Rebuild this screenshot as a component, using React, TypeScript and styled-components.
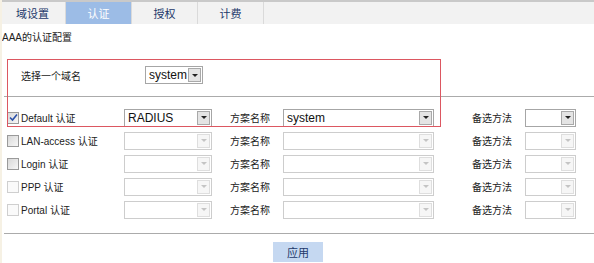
import React from 'react';
import { createGlobalStyle, styled } from 'styled-components';

const GlobalStyle = createGlobalStyle`
  body {
    margin: 0;
    background: #ffffff;
    font-family: "Liberation Sans", "Noto Sans CJK SC", sans-serif;
    font-size: 10px;
    color: #222222;
  }
`;

const StyledPage = styled.div`
  position: relative;
  width: 594px;
  height: 263px;
  overflow: hidden;
  border-left: 2px solid #f6f1e4;
  box-sizing: border-box;
`;

const TabBar = styled.div`
  display: flex;
  height: 22px;
  border-top: 2px solid #c9c9c9;
  background: #f2f2f2;
  margin-left: -2px;
`;

const Tab = styled.div<{ $active?: boolean }>`
  width: 65px;
  display: flex;
  align-items: center;
  justify-content: center;
  border-right: 1px solid #dadada;
  background: ${(p) => (p.$active ? '#9cbce6' : 'transparent')};
  color: ${(p) => (p.$active ? '#ffffff' : '#22386a')};
  font-size: 11px;
`;

const Title = styled.div`
  margin-top: 6px;
  height: 16px;
  line-height: 16px;
  font-size: 10px;
  color: #222;
`;

const Content = styled.div`
  padding-left: 2px;
`;

const DomainRow = styled.div`
  display: flex;
  align-items: center;
  height: 30px;
  margin-top: 14px;
  padding-left: 17px;
  font-size: 10px;
`;

const DomainLabel = styled.span`
  width: 124px;
`;

const Divider = styled.div<{ $top: number }>`
  height: 0;
  border-top: 1px solid #ababab;
  margin-top: ${(p) => p.$top}px;
`;

const Rows = styled.div`
  margin-top: 9px;
`;

const Row = styled.div`
  display: grid;
  grid-template-columns: 120px 106px 53px 189px 53px 51px;
  align-items: center;
  height: 23px;
  font-size: 10px;
`;

const Check = styled.span<{ $state: 'checked' | 'enabled' | 'disabled' }>`
  width: 12px;
  height: 12px;
  box-sizing: border-box;
  margin-left: 3px;
  margin-right: 2px;
  border: 1px solid ${(p) => (p.$state === 'disabled' ? '#cfcfcf' : '#9a9a9a')};
  background: ${(p) =>
    p.$state === 'disabled' ? '#fafafa' : 'linear-gradient(135deg, #d8d8d8, #f7f7f7)'};
  display: inline-flex;
  align-items: center;
  justify-content: center;
  flex-shrink: 0;
`;

const CheckCell = styled.label`
  display: flex;
  align-items: center;
  white-space: nowrap;
`;

const SelectBox = styled.div<{ $w: number; $disabled?: boolean }>`
  width: ${(p) => p.$w}px;
  height: 18px;
  box-sizing: border-box;
  border: 1px solid ${(p) => (p.$disabled ? '#cdcdcd' : '#a6a6a6')};
  background: #fff;
  display: flex;
  align-items: center;
  font-size: 12px;
  color: #111;
`;

const SelectText = styled.span`
  flex: 1;
  padding-left: 3px;
  overflow: hidden;
  white-space: nowrap;
`;

const Arrow = styled.span<{ $disabled?: boolean }>`
  width: 13px;
  height: 14px;
  margin-right: 1px;
  box-sizing: border-box;
  border: 1px solid ${(p) => (p.$disabled ? '#dedede' : '#a9a9a9')};
  background: ${(p) => (p.$disabled ? '#f6f6f6' : '#e4e4e4')};
  display: flex;
  align-items: center;
  justify-content: center;
  &::after {
    content: '';
    border-left: 3px solid transparent;
    border-right: 3px solid transparent;
    border-top: 3px solid ${(p) => (p.$disabled ? '#c4c4c4' : '#222')};
  }
`;

const Label = styled.span`
  white-space: nowrap;
`;

const Footer = styled.div`
  display: flex;
  justify-content: center;
  padding-top: 8px;
  padding-right: 2px;
`;

const ApplyButton = styled.button`
  width: 50px;
  height: 20px;
  border: none;
  background: #c5d8f1;
  color: #22386a;
  font-family: inherit;
  font-size: 11px;
  padding: 0;
`;

const Highlight = styled.div`
  position: absolute;
  left: 5px;
  top: 59px;
  width: 434px;
  height: 68px;
  border: 1px solid #dc5761;
  box-sizing: border-box;
  pointer-events: none;
`;

const Select: React.FC<{ w: number; value?: string; disabled?: boolean }> = ({ w, value, disabled }) => (
  <SelectBox $w={w} $disabled={disabled}>
    <SelectText>{value}</SelectText>
    <Arrow $disabled={disabled} />
  </SelectBox>
);

const rows: { name: string; state: 'checked' | 'enabled' | 'disabled'; method?: string; scheme?: string }[] = [
  { name: 'Default 认证', state: 'checked', method: 'RADIUS', scheme: 'system' },
  { name: 'LAN-access 认证', state: 'enabled' },
  { name: 'Login 认证', state: 'enabled' },
  { name: 'PPP 认证', state: 'disabled' },
  { name: 'Portal 认证', state: 'disabled' },
];

const App: React.FC = () => {
  return (
    <>
      <GlobalStyle />
      <StyledPage>
        <TabBar>
          <Tab>域设置</Tab>
          <Tab $active>认证</Tab>
          <Tab>授权</Tab>
          <Tab>计费</Tab>
        </TabBar>
        <Title>AAA的认证配置</Title>
        <Content>
          <DomainRow>
            <DomainLabel>选择一个域名</DomainLabel>
            <Select w={58} value="system" />
          </DomainRow>
          <Divider $top={6} />
          <Rows>
            {rows.map((r) => {
              const on = r.state === 'checked';
              return (
                <Row key={r.name}>
                  <CheckCell>
                    <Check $state={r.state}>
                      {on && (
                        <svg width="9" height="9" viewBox="0 0 9 9">
                          <path d="M1 4.5 L3.5 7 L8 1.5" fill="none" stroke="#2b50a8" strokeWidth="1.6" />
                        </svg>
                      )}
                    </Check>
                    {r.name}
                  </CheckCell>
                  <Select w={88} value={r.method} disabled={!on} />
                  <Label>方案名称</Label>
                  <Select w={151} value={r.scheme} disabled={!on} />
                  <Label>备选方法</Label>
                  <Select w={51} disabled={!on} />
                </Row>
              );
            })}
          </Rows>
          <Divider $top={12} />
          <Footer>
            <ApplyButton>应用</ApplyButton>
          </Footer>
        </Content>
        <Highlight />
      </StyledPage>
    </>
  );
};

export default App;
